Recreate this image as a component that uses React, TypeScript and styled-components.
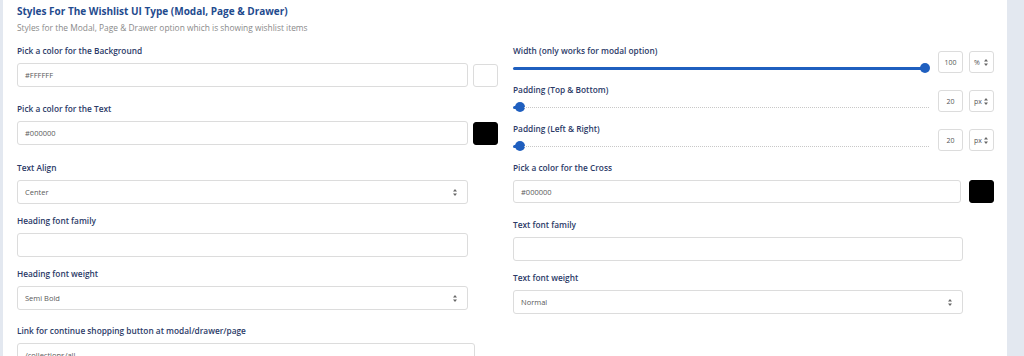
import React from "react";
import styled, { createGlobalStyle } from "styled-components";

const Global = createGlobalStyle`
  html, body { margin: 0; padding: 0; overflow: hidden; background: #e3e8f0; }
  body { font-family: "Open Sans", "Liberation Sans", sans-serif; }
  * { box-sizing: border-box; }
`;

const Page = styled.div`
  display: flex;
  height: 356px;
  padding-left: 3px;
  overflow: hidden;
`;

const Panel = styled.section`
  width: 1004px;
  height: 356px;
  overflow: hidden;
  background: #ffffff;
  padding: 4px 13px 0 14px;
`;

const Title = styled.h2`
  margin: 0;
  font-size: 10px;
  line-height: 14px;
  font-weight: 700;
  color: #1f4b8e;
`;

const Subtitle = styled.p`
  margin: 4px 0 0;
  font-size: 8.4px;
  line-height: 12px;
  color: #8a8a8a;
`;

const Columns = styled.div`
  display: grid;
  grid-template-columns: 481px 481px;
  column-gap: 15px;
  margin-top: 11px;
  align-items: start;
`;

const Column = styled.div`
  display: flex;
  flex-direction: column;
`;

const Field = styled.div<{ $mb?: number }>`
  display: flex;
  flex-direction: column;
  margin-bottom: ${(p) => p.$mb ?? 12}px;
`;

const Label = styled.label`
  font-size: 8.3px;
  line-height: 12px;
  font-weight: 600;
  color: #2b3a67;
  margin-bottom: 6px;
`;

const InputRow = styled.div<{ $gap?: number }>`
  display: flex;
  align-items: center;
  gap: ${(p) => p.$gap ?? 5}px;
`;

const TextBox = styled.div<{ $w?: number; $h?: number }>`
  width: ${(p) => (p.$w ? `${p.$w}px` : "auto")};
  flex: ${(p) => (p.$w ? "none" : "1")};
  height: ${(p) => p.$h ?? 24}px;
  border: 1px solid #dcdcdc;
  border-radius: 3px;
  background: #fff;
  display: flex;
  align-items: center;
  justify-content: space-between;
  padding: 0 10px 0 7px;
  font-size: 7.5px;
  color: #5a5a5a;
`;

const Swatch = styled.div<{ $c: string }>`
  width: 25px;
  height: 23px;
  border-radius: 3px;
  border: 1px solid ${(p) => (p.$c === "#000" ? "#000" : "#dcdcdc")};
  background: ${(p) => p.$c};
`;

const SliderField = styled.div<{ $mb?: number }>`
  display: flex;
  align-items: flex-end;
  gap: 6px;
  margin-bottom: ${(p) => p.$mb ?? 11}px;
`;

const SliderMain = styled.div`
  flex: 1;
  display: flex;
  flex-direction: column;
  margin-right: 3px;
`;

const SliderLabel = styled.div`
  font-size: 8.3px;
  line-height: 12px;
  font-weight: 600;
  color: #2b3a67;
`;

const Track = styled.div`
  height: 10px;
  margin-top: 6px;
  display: flex;
  align-items: center;
`;

const TrackRest = styled.div`
  flex: 1;
  height: 0;
  border-top: 1px dotted #c8c8c8;
`;

const TrackFill = styled.div`
  height: 3px;
  background: #1f5fbf;
  border-radius: 2px;
`;

const Thumb = styled.div`
  width: 10px;
  height: 10px;
  border-radius: 50%;
  background: #1f5fbf;
  margin-left: -4px;
  margin-right: -1px;
  flex: none;
`;

const SmallBox = styled.div<{ $unit?: boolean }>`
  width: 25px;
  height: 22px;
  border: 1px solid #dcdcdc;
  border-radius: 3px;
  display: flex;
  align-items: center;
  justify-content: ${(p) => (p.$unit ? "space-between" : "center")};
  padding: ${(p) => (p.$unit ? "0 5px 0 4px" : "0")};
  font-size: 7px;
  color: #555;
  flex: none;
`;

const Arrows = () => (
  <svg width="4" height="7" viewBox="0 0 4 7">
    <path d="M2 0 L4 2.6 L0 2.6 Z M2 7 L4 4.4 L0 4.4 Z" fill="#666" />
  </svg>
);

const Slider = ({ label, fill, value, unit, mb }: { label: string; fill: string; value: string; unit: string; mb?: number }) => (
  <SliderField $mb={mb}>
    <SliderMain>
      <SliderLabel>{label}</SliderLabel>
      <Track>
        <TrackFill style={{ width: fill }} />
        <Thumb />
        <TrackRest />
      </Track>
    </SliderMain>
    <SmallBox>{value}</SmallBox>
    <SmallBox $unit>
      <span>{unit}</span>
      <Arrows />
    </SmallBox>
  </SliderField>
);

export default function App() {
  return (
    <>
      <Global />
      <Page>
        <Panel>
          <Title>Styles For The Wishlist UI Type (Modal, Page &amp; Drawer)</Title>
          <Subtitle>Styles for the Modal, Page &amp; Drawer option which is showing wishlist items</Subtitle>
          <Columns>
            <Column>
              <Field $mb={16}>
                <Label>Pick a color for the Background</Label>
                <InputRow>
                  <TextBox>#FFFFFF</TextBox>
                  <Swatch $c="#fff" />
                </InputRow>
              </Field>
              <Field $mb={17}>
                <Label>Pick a color for the Text</Label>
                <InputRow>
                  <TextBox>#000000</TextBox>
                  <Swatch $c="#000" />
                </InputRow>
              </Field>
              <Field $mb={11}>
                <Label>Text Align</Label>
                <TextBox $w={451}>
                  <span>Center</span>
                  <Arrows />
                </TextBox>
              </Field>
              <Field $mb={11}>
                <Label>Heading font family</Label>
                <TextBox $w={451} />
              </Field>
              <Field $mb={15}>
                <Label>Heading font weight</Label>
                <TextBox $w={451}>
                  <span>Semi Bold</span>
                  <Arrows />
                </TextBox>
              </Field>
              <Field>
                <Label>Link for continue shopping button at modal/drawer/page</Label>
                <TextBox $w={458}>/collections/all</TextBox>
              </Field>
            </Column>
            <Column>
              <Slider label="Width (only works for modal option)" fill="100%" value="100" unit="%" />
              <Slider label="Padding (Top & Bottom)" fill="6px" value="20" unit="px" />
              <Slider label="Padding (Left & Right)" fill="6px" value="20" unit="px" />
              <Field $mb={16}>
                <Label>Pick a color for the Cross</Label>
                <InputRow $gap={8}>
                  <TextBox $h={23}>#000000</TextBox>
                  <Swatch $c="#000" />
                </InputRow>
              </Field>
              <Field $mb={11}>
                <Label>Text font family</Label>
                <TextBox $w={450} />
              </Field>
              <Field>
                <Label>Text font weight</Label>
                <TextBox $w={450}>
                  <span>Normal</span>
                  <Arrows />
                </TextBox>
              </Field>
            </Column>
          </Columns>
        </Panel>
      </Page>
    </>
  );
}
